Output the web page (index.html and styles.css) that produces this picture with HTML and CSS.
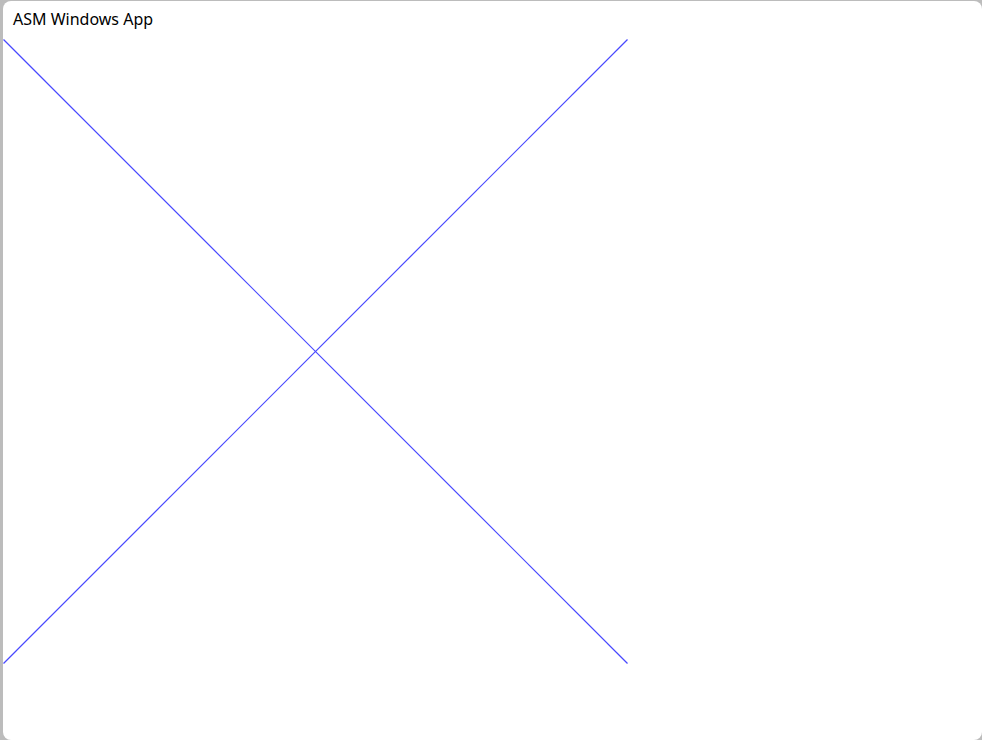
FILE: index.html
```html
<!DOCTYPE html>
<html lang="en">
<head>
    <meta charset="UTF-8">
    <title>ASM Windows App</title>
    <link rel="stylesheet" href="styles.css">
</head>
<body>
    <div class="window">
        <div class="titlebar">ASM Windows App</div>
        <svg class="canvas" width="625" height="625" viewBox="0 0 625 625">
            <path class="stroke" d="M0.5 0.5 L624.5 624.5"/>
            <path class="stroke" d="M0.5 624.5 L624.5 0.5"/>
        </svg>
    </div>
</body>
</html>
```

FILE: styles.css
```css
html, body { margin: 0; height: 100%; overflow: hidden; }
body { background: #bcbcbc; font-family: "Noto Sans", "Open Sans", Arial, sans-serif; }
.window { margin: 1px 0 0 3px; height: 739px; background: #fff; border-radius: 8px; }
.titlebar { height: 38px; padding-left: 10px; font-size: 16px; line-height: 36px; color: #000; box-sizing: border-box; }
.canvas { display: block; }
.stroke { fill: none; stroke: #4848ff; stroke-width: 1.2; }
```
